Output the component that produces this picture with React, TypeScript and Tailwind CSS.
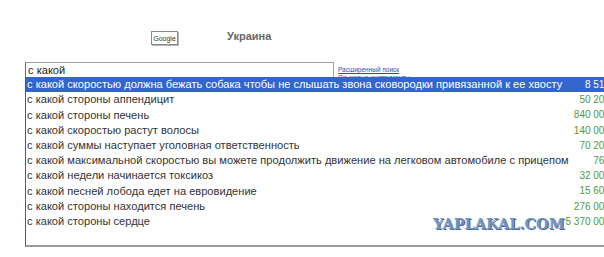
import React from "react";

const rows: [string, string][] = [
  ["с какой скоростью должна бежать собака чтобы не слышать звона сковородки привязанной к ее хвосту", "8 510"],
  ["с какой стороны аппендицит", "50 200"],
  ["с какой стороны печень", "840 000"],
  ["с какой скоростью растут волосы", "140 000"],
  ["с какой суммы наступает уголовная ответственность", "70 200"],
  ["с какой максимальной скоростью вы можете продолжить движение на легковом автомобиле с прицепом", "760"],
  ["с какой недели начинается токсикоз", "32 000"],
  ["с какой песней лобода едет на евровидение", "15 600"],
  ["с какой стороны находится печень", "276 000"],
  ["с какой стороны сердце", "5 370 000"],
];

export default function App() {
  return (
    <div className="relative w-[604px] h-[257px] overflow-hidden bg-white font-['Liberation_Sans',Arial,sans-serif]">
      <div className="flex items-start pt-[31px] pl-[151px]">
        <div className="w-[27px] h-[14px] border border-[#8a8a8a] bg-white shadow-[1px_1px_0_#b5b5b5] flex items-center justify-center text-[7px] leading-none text-[#333]">
          Google
        </div>
        <div className="ml-[49px] mt-[-2px] text-[11px] font-bold text-[#666] leading-[14px]">Украина</div>
      </div>

      <div className="relative flex mt-[17px] ml-[25px]">
        <div className="w-[309px] h-[16px] border border-[#a0a0a0] border-l-[#6a6a6a] pl-[2px] text-[11.1px] leading-[14px] text-[#222]">
          с какой
        </div>
        <div className="ml-[4px] pt-[4px] text-[6.5px] leading-[8px]">
          <div className="text-[#2a4fb0] underline">Расширенный поиск</div>
          <div className="text-[#2a4fb0] underline">Языковые инструменты</div>
        </div>

        <div className="absolute left-0 top-[15px] w-[600px] bg-white border-l border-[#5a5a5a] border-b-2 border-b-[#9a9a9a] pb-[16px]">
          {rows.map(([q, n], i) => (
            <div
              key={i}
              className={
                "flex h-[15.2px] items-center justify-between whitespace-nowrap text-[11.1px] " +
                (i === 0 ? "bg-[#3366cc] text-white" : "text-[#333]")
              }
            >
              <span className="pl-[1px] shrink-0">{q}</span>
              <span
                className={
                  "shrink-0 text-right pr-[15px] text-[10px] " +
                  (i === 0 ? "text-white" : "text-[#4f9a3c]")
                }
              >
                {n}
              </span>
            </div>
          ))}
        </div>
      </div>

      <div className="absolute left-[433px] top-[217px] text-[14.5px] font-bold text-[#7394c0] [text-shadow:1px_1px_0_#4f6d98] font-['DejaVu_Serif',serif] leading-none">
        YAPLAKAL.COM
      </div>
    </div>
  );
}
